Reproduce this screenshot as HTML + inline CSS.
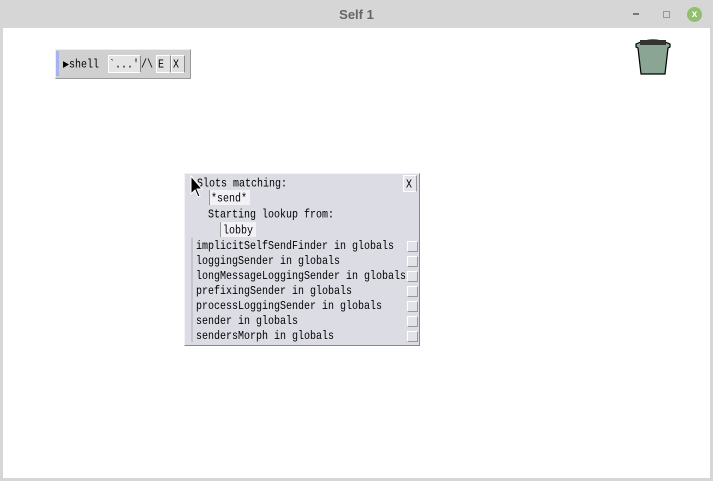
<!DOCTYPE html><html><head><style>
body{margin:0;width:713px;height:481px;overflow:hidden;background:#d6d6d6;font-family:"Liberation Mono",monospace;position:relative}
.t{position:absolute;top:0;left:0;width:713px;height:28px;text-align:center;font:bold 13px "Liberation Sans",sans-serif;color:#666;line-height:29px}
.w{position:absolute;left:3px;top:28px;width:707px;height:450px;background:#fff}
.a{position:absolute;font-size:10px;color:#000;white-space:pre;line-height:15px;transform:scaleY(1.15);transform-origin:0 0}
.ck{position:absolute;left:407px;width:9px;height:9px;background:#e2e2e8;border:1px solid #fff;border-right-color:#999;border-bottom-color:#999}
</style></head><body>
<div class="t">Self 1</div>
<div style="position:absolute;left:633px;top:13px;width:6px;height:2px;background:#777"></div>
<div style="position:absolute;left:663px;top:11px;width:5px;height:5px;border:1px solid #999"></div>
<div style="position:absolute;left:687px;top:7px;width:15px;height:15px;border-radius:50%;background:#8fbf6f;color:#fff;font:bold 10px 'Liberation Sans';text-align:center;line-height:15px">x</div>
<div class="w"></div>
<div style="position:absolute;left:55px;top:49px;width:134px;height:28px;background:#d0d0d0;border:1px solid #eee;border-right-color:#999;border-bottom-color:#999"></div>
<div style="position:absolute;left:56px;top:51px;width:3px;height:25px;background:#aab0f0"></div>
<div class="a" style="left:63px;top:57px">▶shell</div>
<div style="position:absolute;left:108px;top:55px;width:31px;height:16px;background:#e4e4e4;border:1px solid #fff;border-right-color:#888"></div>
<div class="a" style="left:109px;top:57px">`...'</div>
<div class="a" style="left:141px;top:57px">/\</div>
<div style="position:absolute;left:156px;top:55px;width:13px;height:16px;background:#e0e0e0;border:1px solid #fff;border-right-color:#888"></div>
<div class="a" style="left:158px;top:57px">E</div>
<div style="position:absolute;left:171px;top:55px;width:12px;height:16px;background:#e0e0e0;border:1px solid #fff;border-right-color:#888"></div>
<div class="a" style="left:173px;top:57px">X</div>
<svg style="position:absolute;left:634px;top:38px" width="40" height="38"><path d="M2 6 Q19 -2 36 6 L36 9 L34 10 L31 36 L7 36 L4 10 L2 9Z" fill="#8aa594" stroke="#000" stroke-width="1.2"/><rect x="6" y="2" width="26" height="5" fill="#333"/></svg>
<div style="position:absolute;left:184px;top:173px;width:234px;height:171px;background:#dcdce4;border:1px solid #f4f4f8;border-right-color:#888;border-bottom-color:#888"></div>
<div style="position:absolute;left:191px;top:238px;width:2px;height:104px;background:#c4c4cc"></div>
<div class="a" style="left:197px;top:176px">Slots matching:</div>
<div style="position:absolute;left:403px;top:175px;width:12px;height:15px;background:#e4e4ea;border:1px solid #fff;border-right-color:#999"></div>
<div class="a" style="left:406px;top:177px">X</div>
<div style="position:absolute;left:209px;top:190px;width:40px;height:15px;background:#f2f2f6;border-left:1px solid #999"></div>
<div class="a" style="left:211px;top:191px">*send*</div>
<div class="a" style="left:208px;top:207px">Starting lookup from:</div>
<div style="position:absolute;left:220px;top:222px;width:35px;height:15px;background:#f2f2f6;border-left:1px solid #999"></div>
<div class="a" style="left:223px;top:223px">lobby</div>
<div class="a" style="left:196px;top:240px;line-height:13px">implicitSelfSendFinder in globals
loggingSender in globals
longMessageLoggingSender in globals
prefixingSender in globals
processLoggingSender in globals
sender in globals
sendersMorph in globals</div>
<div class="ck" style="top:241px"></div><div class="ck" style="top:256px"></div><div class="ck" style="top:271px"></div><div class="ck" style="top:286px"></div><div class="ck" style="top:301px"></div><div class="ck" style="top:316px"></div><div class="ck" style="top:331px"></div>
<svg style="position:absolute;left:189px;top:175px" width="16" height="24"><path d="M2 1 L2 19 L6 15 L9 22 L11 21 L8 14 L13 14Z" fill="#000" stroke="#fff" stroke-width="1"/></svg>
</body></html>
